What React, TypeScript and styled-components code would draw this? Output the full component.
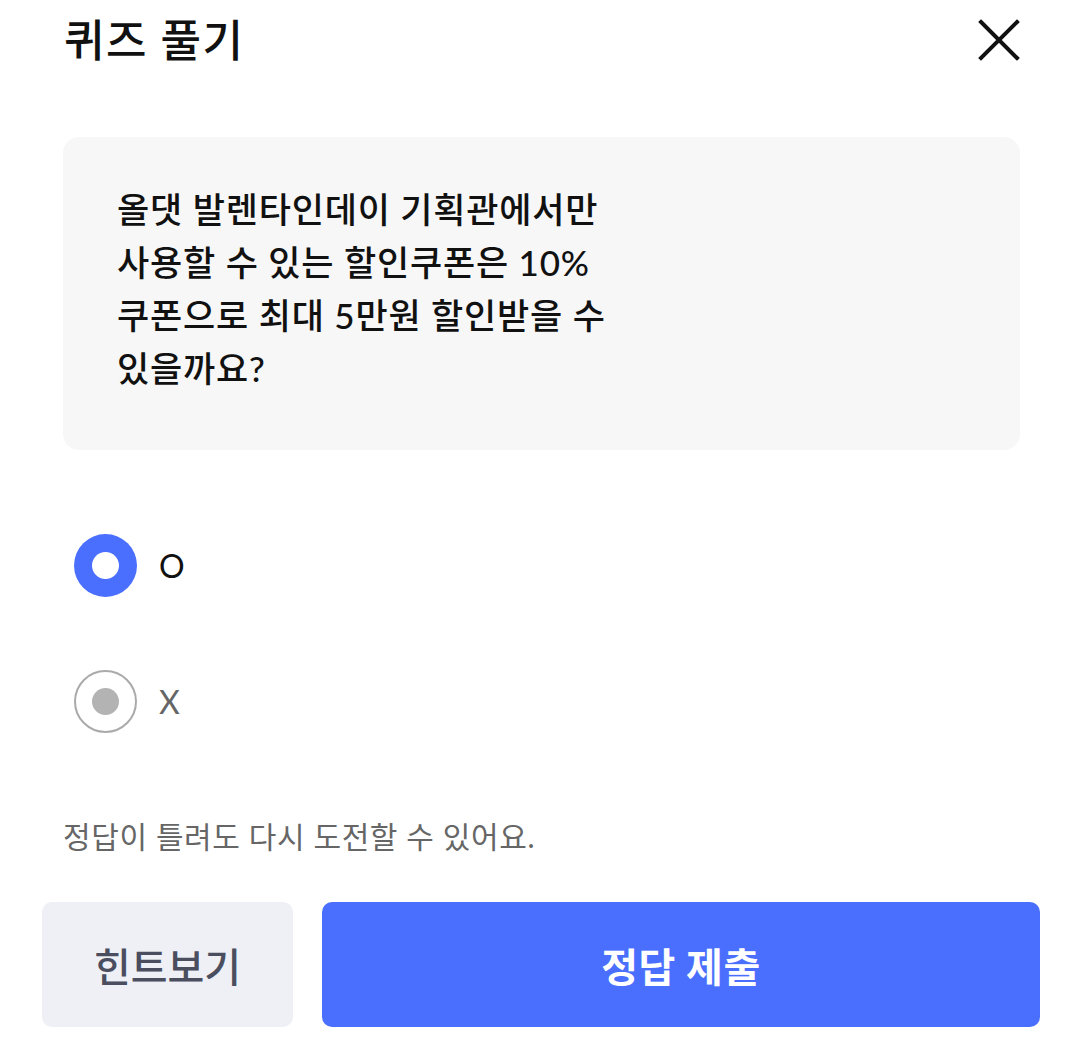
import styled, { createGlobalStyle } from 'styled-components'

const c_blue = '#4a6ffe'

const GlobalStyle = createGlobalStyle`
  html, body {
    margin: 0;
    padding: 0;
    background: #fff;
  }
  body {
    font-family: 'Lato', 'Noto Sans CJK KR', sans-serif;
    color: #111;
  }
`

const Page = styled.div`
  width: 1080px;
  height: 1046px;
  box-sizing: border-box;
  display: flex;
  flex-direction: column;
  padding: 0 40px 0 42px;
`

const Inner = styled.div`
  padding: 0 20px 0 21px;
  display: flex;
  flex-direction: column;
`

const Header = styled.header`
  display: flex;
  align-items: center;
  justify-content: space-between;
  height: 82px;

  > h1 {
    margin: -2px 0 0 1px;
    font-size: 44px;
    font-weight: 500;
    letter-spacing: 1.5px;
    line-height: 82px;
  }
`

const CloseButton = styled.button`
  border: 0;
  background: none;
  padding: 0;
  width: 42px;
  height: 42px;
  cursor: pointer;
  display: flex;
  margin-right: 0;
  margin-top: -2px;
`

const QuestionCard = styled.div`
  margin-top: 55px;
  background: #f7f7f7;
  border-radius: 16px;
  height: 313px;
  box-sizing: border-box;
  padding: 46px 54px 0 54px;

  > p {
    margin: 0;
    max-width: 520px;
    font-size: 35px;
    font-weight: 500;
    letter-spacing: 0.8px;
    line-height: 53px;
    color: #111;
    word-break: keep-all;
  }
`

const Options = styled.div`
  margin-top: 84px;
  display: flex;
  flex-direction: column;
  gap: 73px;
`

const Option = styled.label<{ $selected?: boolean }>`
  display: flex;
  align-items: center;
  gap: 22px;
  margin-left: 11px;
  font-size: 32px;
  color: ${(p) => (p.$selected ? '#111' : '#666')};
  cursor: pointer;
`

const RadioMark = styled.span<{ $selected?: boolean }>`
  width: 63px;
  height: 63px;
  border-radius: 50%;
  box-sizing: border-box;
  display: flex;
  align-items: center;
  justify-content: center;
  background: ${(p) => (p.$selected ? c_blue : '#fff')};
  border: ${(p) => (p.$selected ? 'none' : '2px solid #aaa')};

  &::after {
    content: '';
    width: 27px;
    height: 27px;
    border-radius: 50%;
    background: ${(p) => (p.$selected ? '#fff' : '#b3b3b3')};
  }
`

const Notice = styled.p`
  margin: 83px 0 0;
  font-size: 30px;
  letter-spacing: 0.6px;
  color: #666;
  line-height: 40px;
`

const ButtonRow = styled.div`
  margin-top: 46px;
  display: flex;
  gap: 29px;
`

const ButtonBase = styled.button`
  height: 125px;
  border: 0;
  border-radius: 10px;
  font-family: 'Lato', 'Noto Sans CJK KR', sans-serif;
  font-size: 40px;
  cursor: pointer;
`

const HintButton = styled(ButtonBase)`
  width: 251px;
  background: #eef0f5;
  color: #4a4e5e;
  font-weight: 500;
`

const SubmitButton = styled(ButtonBase)`
  flex: 1;
  background: ${c_blue};
  color: #fff;
  font-weight: 700;
  letter-spacing: 0.5px;
`

function App() {
  return (
    <>
      <GlobalStyle />
      <Page>
        <Inner>
          <Header>
            <h1>퀴즈 풀기</h1>
            <CloseButton aria-label="닫기">
              <svg width="42" height="42" viewBox="0 0 42 42">
                <path
                  d="M3 3 L39 39 M39 3 L3 39"
                  stroke="#111"
                  strokeWidth="4"
                  strokeLinecap="square"
                />
              </svg>
            </CloseButton>
          </Header>

          {/* QUESTION */}
          <QuestionCard>
            <p>
              올댓 발렌타인데이 기획관에서만 사용할 수 있는 할인쿠폰은 10%
              쿠폰으로 최대 5만원 할인받을 수 있을까요?
            </p>
          </QuestionCard>

          {/* ANSWERS */}
          <Options>
            <Option $selected>
              <RadioMark $selected />
              O
            </Option>
            <Option>
              <RadioMark />X
            </Option>
          </Options>

          <Notice>정답이 틀려도 다시 도전할 수 있어요.</Notice>
        </Inner>

        <ButtonRow>
          <HintButton>힌트보기</HintButton>
          <SubmitButton>정답 제출</SubmitButton>
        </ButtonRow>
      </Page>
    </>
  )
}

export default App
